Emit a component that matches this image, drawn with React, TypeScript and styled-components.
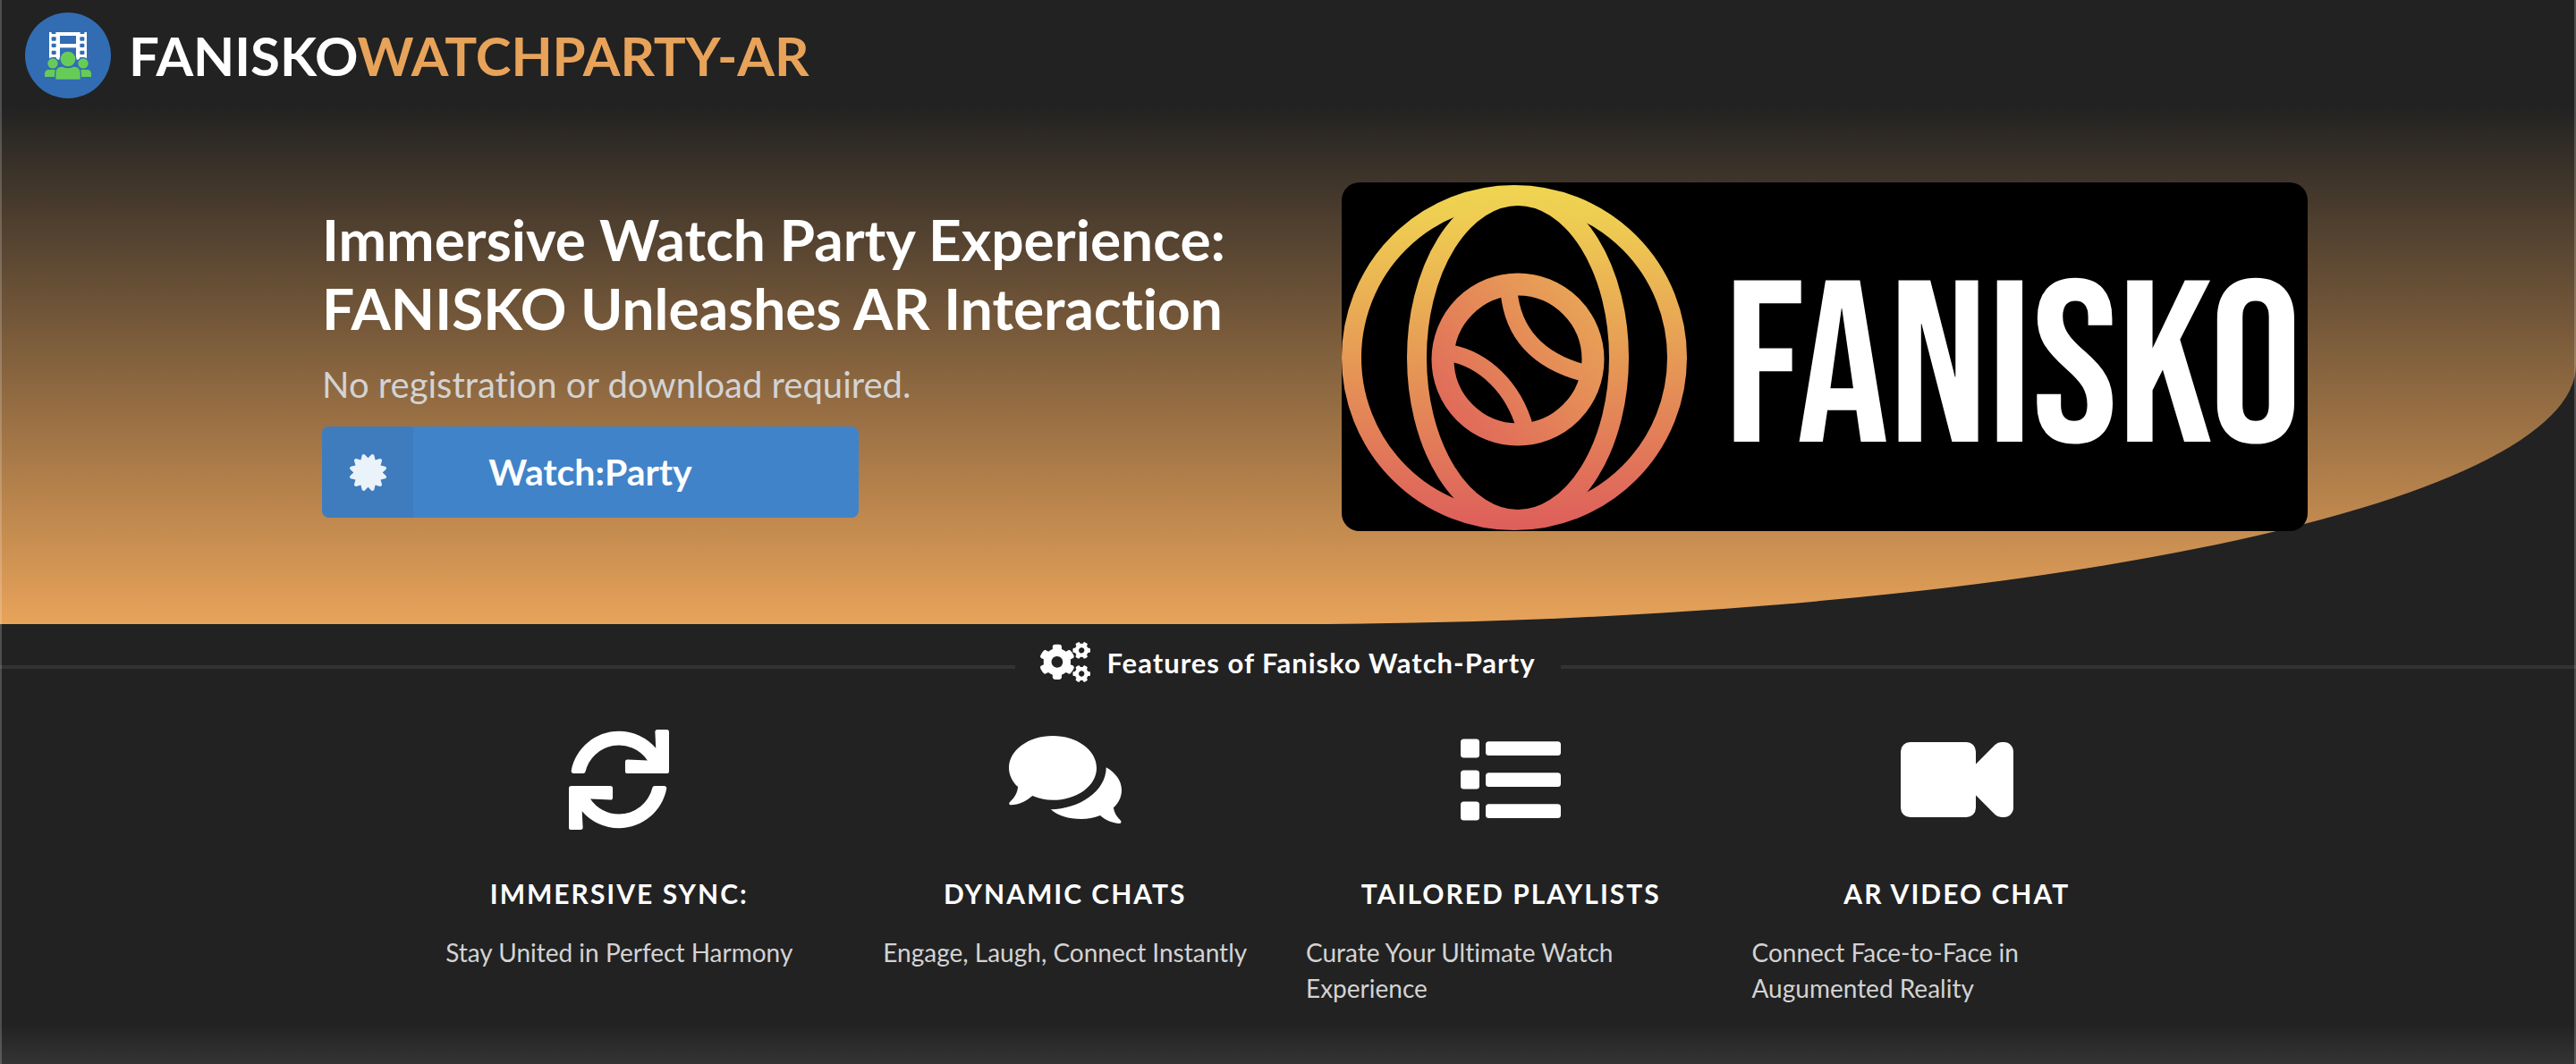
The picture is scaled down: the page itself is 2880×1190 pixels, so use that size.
import React from 'react';
import styled, { createGlobalStyle } from 'styled-components';
import { FaCertificate, FaCogs, FaSync } from 'react-icons/fa';

const colors = {
  page: '#222222',
  accent: '#e8a35a',
  blue: '#4183c9',
  blueDark: '#3f7cbe',
  muted: '#d3d3d3',
  rule: '#333333',
};

const GlobalStyle = createGlobalStyle`
  *, *::before, *::after { box-sizing: border-box; }
  body {
    margin: 0;
    background: ${colors.page};
    color: #ffffff;
    font-family: Lato, 'Noto Sans', sans-serif;
    font-variant-ligatures: none;
  }
  h1, h2, h3, p { margin: 0; }
`;

const Page = styled.div`
  position: relative;
  display: flex;
  flex-direction: column;
  min-height: 100vh;

  &::after {
    content: '';
    position: absolute;
    inset: 0;
    border: solid rgba(255, 255, 255, 0.2);
    border-width: 0 2px;
    pointer-events: none;
  }
`;

const Header = styled.header`
  display: flex;
  padding: 14px 28px 8px;
`;

const Brand = styled.a`
  display: flex;
  align-items: center;
  gap: 20px;
  color: #ffffff;
  text-decoration: none;
`;

const BrandMark = styled.svg`
  display: block;
  width: 96px;
  height: 96px;
`;

const BrandName = styled.h1`
  font-size: 60px;
  line-height: 72px;
  font-weight: 700;
`;

const BrandAccent = styled.span`
  color: ${colors.accent};
`;

const Hero = styled.section`
  padding: 86px 0 104px;
  background: linear-gradient(to bottom, ${colors.page}, ${colors.accent});
  border-bottom-right-radius: 50% 50%;
`;

const HeroGrid = styled.div`
  display: grid;
  grid-template-columns: 1fr 1fr;
  max-width: 2280px;
  margin: 0 auto;
`;

const HeroColumn = styled.div`
  padding-left: 60px;
`;

const HeroCopy = styled(HeroColumn)`
  display: flex;
  flex-direction: column;
  align-items: flex-start;
  gap: 23px;
  padding-top: 25px;
`;

const HeroTitle = styled.h2`
  font-size: 64px;
  line-height: 77px;
  font-weight: 700;
`;

const HeroNote = styled.p`
  font-size: 40px;
  line-height: 48px;
  color: ${colors.muted};
`;

const StartButton = styled.button`
  display: grid;
  grid-template-columns: 102px 1fr 102px;
  align-items: stretch;
  width: 600px;
  height: 102px;
  padding: 0;
  overflow: hidden;
  border: 0;
  border-radius: 8px;
  background: ${colors.blue};
  color: #ffffff;
  font: 700 41px/102px Lato, 'Noto Sans', sans-serif;
  font-variant-ligatures: none;
  cursor: pointer;
`;

const ButtonIcon = styled.span`
  display: flex;
  align-items: center;
  justify-content: center;
  background: ${colors.blueDark};
  color: #eaf2fa;
  font-size: 41px;
`;

const Poster = styled.svg`
  display: block;
  width: 100%;
  height: auto;
  border-radius: 20px;
  background: #000000;
`;

const PosterText = styled.text`
  font-family: 'Bebas Neue', 'Roboto Condensed', Roboto, sans-serif;
  font-size: 258px;
  font-weight: 400;
  fill: #ffffff;
`;

const Divider = styled.div`
  display: flex;
  align-items: center;
  gap: 28px;
  padding-top: 20px;
`;

const Rule = styled.span`
  flex: 1;
  height: 4px;
  margin-top: 10px;
  background: ${colors.rule};
`;

const DividerTitle = styled.h2`
  display: flex;
  align-items: center;
  gap: 18px;
  font-size: 31px;
  line-height: 36px;
  font-weight: 700;
  letter-spacing: 1px;
`;

const CogsIcon = styled(FaCogs)`
  width: 56px;
  height: 45px;
`;

const Features = styled.section`
  display: grid;
  grid-template-columns: repeat(4, 1fr);
  width: 100%;
  max-width: 1994px;
  margin: 0 auto;
  padding: 53px 0 20px;
`;

const Feature = styled.article`
  display: flex;
  flex-direction: column;
  align-items: center;
  padding: 0 20px;
`;

const FeatureIcon = styled.span<{ $wide?: boolean }>`
  display: flex;

  svg {
    width: ${(p) => (p.$wide ? 126 : 112)}px;
    height: 112px;
    fill: #ffffff;
  }
`;

const FeatureTitle = styled.h3`
  margin: 53px 0 28px;
  font-size: 30px;
  line-height: 36px;
  font-weight: 700;
  letter-spacing: 2px;
  text-transform: uppercase;
`;

const FeatureText = styled.p`
  font-size: 28px;
  line-height: 40px;
  color: ${colors.muted};
`;

const Footer = styled.footer`
  flex: 1;
  min-height: 45px;
  background: linear-gradient(to bottom, ${colors.page}, #343434);
`;

function ChatIcon() {
  return (
    <svg viewBox="0 0 576 512" aria-hidden="true">
      <path d="M224 32C100 32 0 105 0 196c0 36 17 70 46 97c-3 30-16 55-40 76c-9 8-5 16 4 16c42 0 81-21 110-47c32 14 67 22 104 22c124 0 224-73 224-164S348 32 224 32z" />
      <path d="M214 408C355 406 497 318 497 193C545 220 576 262 576 308C576 345 560 375 534 399C538 425 550 445 570 464C577 471 573 480 564 480C527 478 492 462 466 439C436 452 404 457 369 457C305 457 250 440 214 408z" />
    </svg>
  );
}

function ListIcon() {
  return (
    <svg viewBox="0 0 512 512" aria-hidden="true">
      {[48, 208, 368].map((y) => (
        <React.Fragment key={y}>
          <rect x="0" y={y} width="96" height="96" rx="16" />
          <rect x="128" y={y + 12} width="384" height="72" rx="16" />
        </React.Fragment>
      ))}
    </svg>
  );
}

function VideoIcon() {
  return (
    <svg viewBox="0 0 576 512" aria-hidden="true">
      <rect x="0" y="64" width="384" height="384" rx="48" />
      <path d="M528 64h-12a48 48 0 0 0-34 14L382 178v156l100 100a48 48 0 0 0 34 14h12c26 0 48-22 48-48V112c0-26-22-48-48-48z" />
    </svg>
  );
}

const features = [
  { icon: <FaSync />, title: 'Immersive Sync:', text: 'Stay United in Perfect Harmony' },
  { icon: <ChatIcon />, wide: true, title: 'Dynamic Chats', text: 'Engage, Laugh, Connect Instantly' },
  { icon: <ListIcon />, title: 'Tailored Playlists', text: 'Curate Your Ultimate Watch Experience' },
  { icon: <VideoIcon />, wide: true, title: 'AR Video Chat', text: 'Connect Face-to-Face in Augumented Reality' },
];

function Logo() {
  return (
    <BrandMark viewBox="0 0 288 288" aria-hidden="true">
      <circle cx="144" cy="144" r="144" fill="#326db3" />
      <path d="M81 66h8v6h14v-6h82v6h14v-6h8v92H81z" fill="#ffffff" />
      <g fill="#326db3">
        {[82, 104, 128].map((y) => (
          <React.Fragment key={y}>
            <rect x="89" y={y} width="15" height="13" rx="3" />
            <rect x="184" y={y} width="15" height="13" rx="3" />
          </React.Fragment>
        ))}
        <rect x="89" y="150" width="15" height="9" />
        <rect x="184" y="150" width="15" height="9" />
        <rect x="117" y="78" width="54" height="27" />
        <rect x="117" y="118" width="54" height="30" />
      </g>
      <g fill="#67cb57" stroke="#326db3" strokeWidth="4">
        <circle cx="93" cy="171" r="19" />
        <circle cx="195" cy="171" r="19" />
        <path d="M64 218v-12q0-16 16-16h24v28z" />
        <path d="M224 218v-12q0-16-16-16h-24v28z" />
        <path d="M101 226v-20q0-26 22-26q21 10 42 0q22 0 22 26v20z" />
        <circle cx="144" cy="156" r="27" />
      </g>
    </BrandMark>
  );
}

function FaniskoPoster() {
  return (
    <Poster viewBox="0 0 1080 390" role="img" aria-label="Fanisko">
      <defs>
        <linearGradient id="ring" gradientUnits="userSpaceOnUse" x1="0" y1="0" x2="0" y2="390">
          <stop offset="0" stopColor="#efd650" />
          <stop offset="0.12" stopColor="#eecb52" />
          <stop offset="0.5" stopColor="#e69a55" />
          <stop offset="0.85" stopColor="#e06f5a" />
          <stop offset="1" stopColor="#de5e5b" />
        </linearGradient>
        <linearGradient id="ball" gradientUnits="userSpaceOnUse" x1="270" y1="130" x2="130" y2="270">
          <stop offset="0" stopColor="#e8a356" />
          <stop offset="1" stopColor="#e06a5a" />
        </linearGradient>
      </defs>
      <g fill="none" stroke="url(#ring)" strokeWidth="22">
        <circle cx="193" cy="196" r="182" />
        <ellipse cx="197" cy="196" rx="113" ry="181" />
      </g>
      <g fill="none" stroke="url(#ball)">
        <circle cx="197" cy="198" r="84" strokeWidth="25" />
        <path d="M187 122C191 165 215 198 270 213" strokeWidth="19" />
        <path d="M122 191C158 198 192 228 205 275" strokeWidth="19" />
      </g>
      <PosterText x="428" y="290">FANISKO</PosterText>
    </Poster>
  );
}

export default function App() {
  return (
    <Page>
      <GlobalStyle />
      <Header>
        <Brand href="#">
          <Logo />
          <BrandName>
            FANISKO<BrandAccent>WATCHPARTY-AR</BrandAccent>
          </BrandName>
        </Brand>
      </Header>
      <main>
        <Hero>
          <HeroGrid>
            <HeroCopy>
              <HeroTitle>
                Immersive Watch Party Experience:
                <br />
                FANISKO Unleashes AR Interaction
              </HeroTitle>
              <HeroNote>No registration or download required.</HeroNote>
              <StartButton type="button">
                <ButtonIcon>
                  <FaCertificate />
                </ButtonIcon>
                Watch:Party
              </StartButton>
            </HeroCopy>
            <HeroColumn>
              <FaniskoPoster />
            </HeroColumn>
          </HeroGrid>
        </Hero>
        <Divider>
          <Rule />
          <DividerTitle>
            <CogsIcon />
            Features of Fanisko Watch-Party
          </DividerTitle>
          <Rule />
        </Divider>
        <Features>
          {features.map(({ icon, wide, title, text }) => (
            <Feature key={title}>
              <FeatureIcon $wide={wide}>{icon}</FeatureIcon>
              <FeatureTitle>{title}</FeatureTitle>
              <FeatureText>{text}</FeatureText>
            </Feature>
          ))}
        </Features>
      </main>
      <Footer />
    </Page>
  );
}
